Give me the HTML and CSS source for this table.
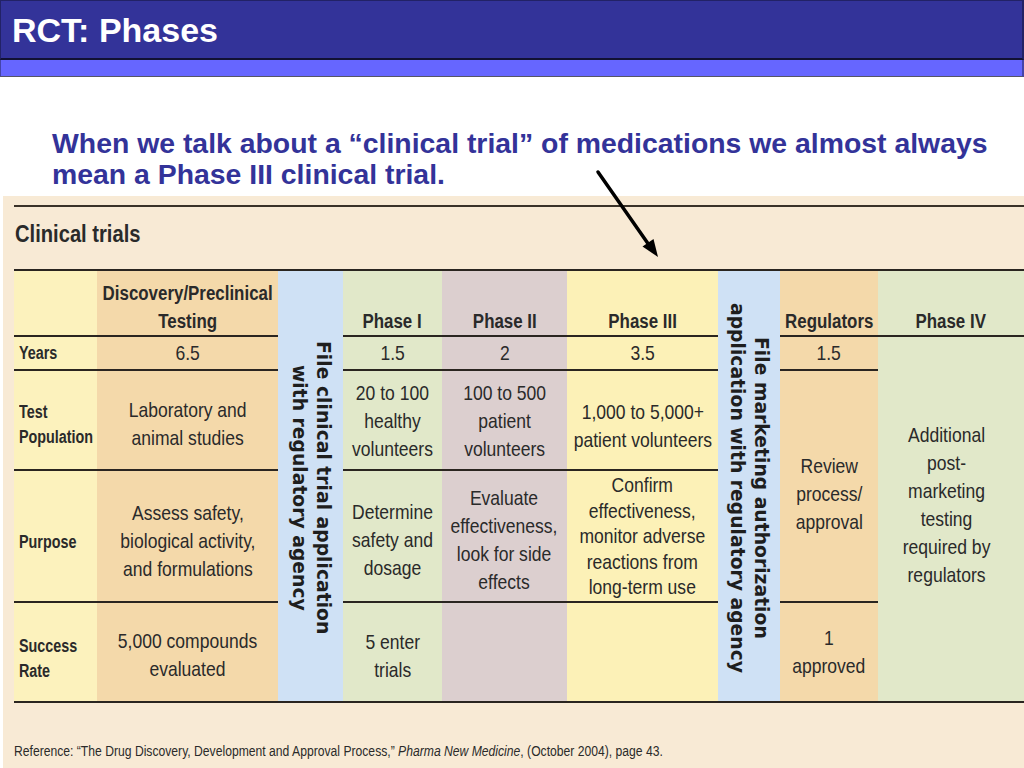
FILE: index.html
```html
<!DOCTYPE html>
<html lang="en">
<head>
<meta charset="utf-8">
<title>RCT: Phases</title>
<link rel="stylesheet" href="styles.css">
</head>
<body>
<header class="slide-head">
  <div class="title-bar"><h1>RCT: Phases</h1></div>
  <div class="sub-bar"></div>
</header>
<p class="lead">When we talk about a “clinical trial” of medications we almost always mean a Phase III clinical trial.</p>
<svg class="arrow" width="80" height="100" viewBox="590 165 80 100" aria-hidden="true">
  <line x1="598" y1="172" x2="649" y2="245" stroke="#000" stroke-width="3.5" stroke-linecap="round"/>
  <polygon points="658,257 642.5,246.5 653.5,239" fill="#000"/>
</svg>
<section class="figure">
  <h2 class="fig-title"><span class="t">Clinical trials</span></h2>
  <div class="trials">
    <div class="cell lab bb"></div>
    <div class="cell disc bb head"><span class="t">Discovery/Preclinical<br>Testing</span></div>
    <div class="cell blue span-all"><span class="vert">File clinical trial application<br>with regulatory agency</span></div>
    <div class="cell p1 bb head"><span class="t">Phase I</span></div>
    <div class="cell p2 bb head"><span class="t">Phase II</span></div>
    <div class="cell p3 bb head"><span class="t">Phase III</span></div>
    <div class="cell blue span-all"><span class="vert">File marketing authorization<br>application with regulatory agency</span></div>
    <div class="cell reg bb head"><span class="t">Regulators</span></div>
    <div class="cell p4 bb head"><span class="t">Phase IV</span></div>

    <div class="cell lab bb rowlab"><span class="t">Years</span></div>
    <div class="cell disc bb"><span class="t">6.5</span></div>
    <div class="cell p1 bb"><span class="t">1.5</span></div>
    <div class="cell p2 bb"><span class="t">2</span></div>
    <div class="cell p3 bb"><span class="t">3.5</span></div>
    <div class="cell reg bb"><span class="t">1.5</span></div>
    <div class="cell p4 span-body"><span class="t">Additional<br>post-<br>marketing<br>testing<br>required by<br>regulators</span></div>

    <div class="cell lab bb rowlab pt10"><span class="t">Test<br>Population</span></div>
    <div class="cell disc bb pt8"><span class="t">Laboratory and<br>animal studies</span></div>
    <div class="cell p1 bb pt2"><span class="t">20 to 100<br>healthy<br>volunteers</span></div>
    <div class="cell p2 bb pt2"><span class="t">100 to 500<br>patient<br>volunteers</span></div>
    <div class="cell p3 bb pt12"><span class="t">1,000 to 5,000+<br>patient volunteers</span></div>
    <div class="cell reg bb span-two pt16"><span class="t">Review<br>process/<br>approval</span></div>

    <div class="cell lab bb rowlab pt12"><span class="t">Purpose</span></div>
    <div class="cell disc bb pt10"><span class="t">Assess safety,<br>biological activity,<br>and formulations</span></div>
    <div class="cell p1 bb pt8"><span class="t">Determine<br>safety and<br>dosage</span></div>
    <div class="cell p2 bb pt7"><span class="t">Evaluate<br>effectiveness,<br>look for side<br>effects</span></div>
    <div class="cell p3 bb tight"><span class="t">Confirm<br>effectiveness,<br>monitor adverse<br>reactions from<br>long-term use</span></div>

    <div class="cell lab rowlab pt14"><span class="t">Success<br>Rate</span></div>
    <div class="cell disc pt6"><span class="t">5,000 compounds<br>evaluated</span></div>
    <div class="cell p1 pt7"><span class="t">5 enter<br>trials</span></div>
    <div class="cell p2"></div>
    <div class="cell p3"></div>
    <div class="cell reg"><span class="t">1<br>approved</span></div>
  </div>
  <p class="ref"><span class="t">Reference: “The Drug Discovery, Development and Approval Process,” <em>Pharma New Medicine</em>, (October 2004), page 43.</span></p>
</section>
</body>
</html>
```

FILE: styles.css
```css
html, body {
  margin: 0;
  padding: 0;
  background: #ffffff;
}
body {
  width: 1024px;
  height: 768px;
  overflow: hidden;
  position: relative;
  font-family: "Liberation Sans", Arial, sans-serif;
}

/* Slide header */
.slide-head {
  width: 1024px;
}
.title-bar {
  height: 57px;
  width: 1021px;
  background: #333399;
  border-top: 1px solid #222266;
  border-left: 1px solid #222266;
  border-right: 2px solid #222266;
  border-bottom: 2px solid #111133;
}
.title-bar h1 {
  margin: 0;
  padding: 9px 0 0 11px;
  color: #ffffff;
  font-family: "Liberation Sans", Arial, sans-serif;
  font-weight: bold;
  font-size: 34px;
  line-height: 40px;
}
.sub-bar {
  height: 16px;
  width: 1021px;
  background: #6666ff;
  border-left: 1px solid #4444aa;
  border-right: 2px solid #4444aa;
  border-bottom: 1px solid #555566;
}

/* Lead text */
.lead {
  margin: 51px 0 0 0;
  padding: 0 20px 0 52px;
  color: #333399;
  font-family: "Liberation Sans", Arial, sans-serif;
  font-weight: bold;
  font-size: 28.4px;
  line-height: 31px;
  height: 62px;
}

.arrow {
  position: absolute;
  left: 590px;
  top: 165px;
}

/* Figure */
.figure {
  margin: 6px 0 0 3px;
  padding: 9px 0 0 11px;
  background: #f8ead5;
  height: 563px;
  font-family: "Liberation Sans", Arial, sans-serif;
  color: #262626;
}
.t {
  display: inline-block;
  white-space: nowrap;
  transform: scaleX(0.835);
}
.fig-title {
  margin: 0;
  border-top: 2px solid #3a3228;
  height: 64px;
  box-sizing: border-box;
  padding: 13px 0 0 1px;
  font-size: 24px;
  line-height: 28px;
  font-weight: bold;
  color: #2a2a2a;
}
.fig-title .t {
  transform-origin: left center;
  transform: scaleX(0.84);
}

.trials {
  display: grid;
  grid-template-columns: 83px 181px 65px 99px 125px 151px 62px 98px 146px;
  grid-template-rows: 66px 34px 100px 132px 98px;
  border-top: 2px solid #2a2520;
  border-bottom: 2px solid #2a2520;
  width: 1010px;
}
.cell {
  box-sizing: border-box;
  display: flex;
  align-items: center;
  justify-content: center;
  text-align: center;
  font-size: 21px;
  line-height: 28px;
  color: #2a2a2a;
}
.bb { border-bottom: 2px solid #2a2520; }

.pt2  { padding-top: 2px; }
.pt6  { padding-top: 6px; }
.pt7  { padding-top: 7px; }
.pt8  { padding-top: 8px; }
.pt10 { padding-top: 10px; }
.pt12 { padding-top: 12px; }
.pt14 { padding-top: 14px; }
.pt16 { padding-top: 16px; }
.tight { line-height: 25.5px; }

.lab  { background: #fcf2bd; }
.disc { background: #f4d9aa; }
.blue { background: #cfe1f5; }
.p1   { background: #e1e8c9; }
.p2   { background: #dccfcf; }
.p3   { background: #fcf1b7; }
.reg  { background: #f4d9aa; }
.p4   { background: #e1e8c9; }

.head {
  align-items: flex-end;
  padding-bottom: 0;
  font-weight: bold;
  font-size: 20px;
}
.head .t {
  transform: scaleX(0.845);
  transform-origin: center bottom;
}
.rowlab {
  justify-content: flex-start;
  text-align: left;
  padding-left: 5px;
  font-weight: bold;
  font-size: 17.5px;
  line-height: 25px;
}
.rowlab .t {
  transform: scaleX(0.82);
  transform-origin: left center;
}

.span-all { grid-row: span 5; }
.span-body {
  grid-row: span 4;
  align-items: flex-start;
  padding-top: 84px;
  padding-right: 9px;
}
.span-two { grid-row: span 2; }

.vert {
  writing-mode: vertical-rl;
  font-family: "DejaVu Sans", "Liberation Sans", sans-serif;
  font-weight: bold;
  font-size: 18.75px;
  line-height: 24px;
  text-align: center;
  white-space: nowrap;
  color: #1e1e1e;
  transform: translateY(2px);
}

.ref {
  margin: 0;
  padding-top: 40px;
  font-size: 14px;
  line-height: 16px;
  color: #2a2a2a;
}
.ref .t {
  transform: scaleX(0.868);
  transform-origin: left center;
}
.ref em {
  font-style: italic;
}
```
